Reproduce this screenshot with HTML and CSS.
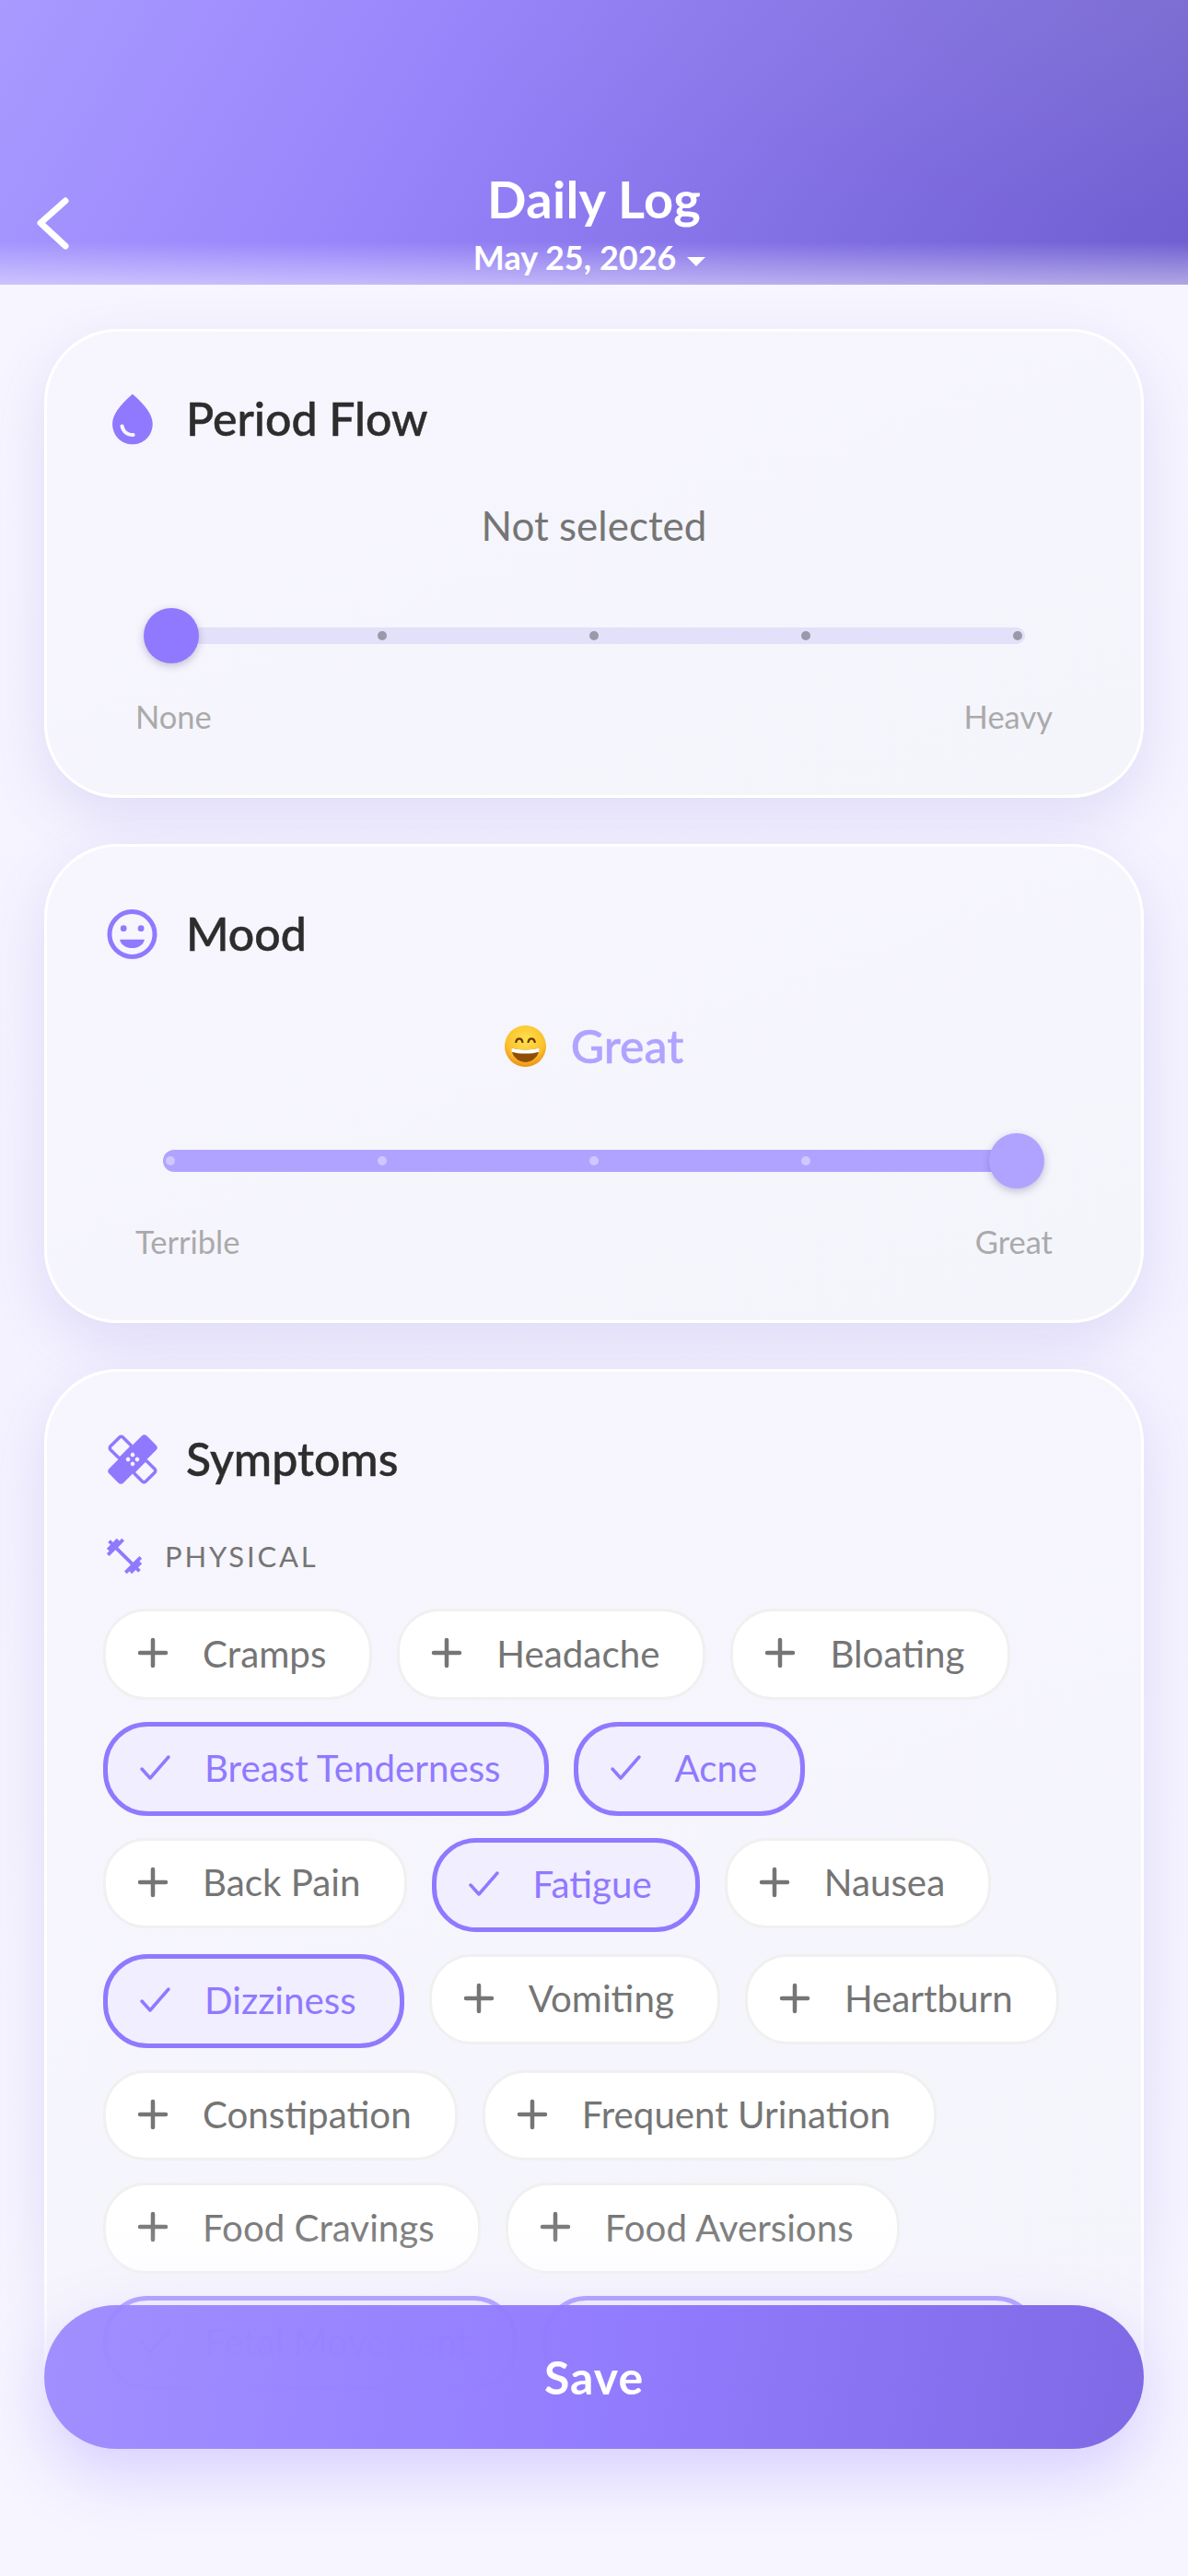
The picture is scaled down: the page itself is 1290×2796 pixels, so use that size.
FILE: index.html

```html
<!DOCTYPE html>
<html>
<head>
	<meta charset="utf-8">
	<title>Daily Log</title>
	<link rel="stylesheet" href="styles.css">
</head>
<body>
<div class="screen">
	<header class="topbar">
		<a class="back">
			<svg width="40" height="60" viewBox="0 0 40 60"><polyline points="34,6 7,30 34,55" fill="none" stroke="#fff" stroke-width="7" stroke-linecap="round" stroke-linejoin="round"/></svg>
		</a>
		<div class="topbar-title">
			<h1>Daily Log</h1>
			<div class="date">May 25, 2026 <span class="caret"></span></div>
		</div>
	</header>

	<main class="content">
		<section class="card">
			<div class="card-head">
				<svg class="icon" viewBox="0.3 1 22 22"><path fill="#9079ff" fill-rule="evenodd" d="M12 2c-5.33 4.55-8 8.48-8 11.8 0 4.98 3.8 8.2 8 8.2s8-3.22 8-8.2c0-3.32-2.67-7.25-8-11.8zM7.83 14c.37 0 .67.26.74.62.41 2.22 2.28 2.98 3.64 2.87.43-.02.79.32.79.75 0 .4-.32.73-.72.75-2.13.13-4.62-1.09-5.19-4.12-.08-.45.28-.87.74-.87z"/></svg>
				<h2>Period Flow</h2>
			</div>
			<div class="status">Not selected</div>
			<div class="slider">
				<div class="track">
					<i></i><i></i><i></i><i></i><i></i>
				</div>
				<div class="thumb"></div>
			</div>
			<div class="ends"><span>None</span><span>Heavy</span></div>
		</section>

		<section class="card">
			<div class="card-head">
				<svg class="icon" viewBox="-4.500 -3 60 60">
					<circle cx="27" cy="27" r="24.5" fill="none" stroke="#9079ff" stroke-width="5"/>
					<circle cx="17.7" cy="20.7" r="3.4" fill="#9079ff"/>
					<circle cx="36.6" cy="20.7" r="3.4" fill="#9079ff"/>
					<path d="M13.6 32.7H40.4C39.5 38.5 33.5 42 27 42S14.5 38.5 13.6 32.7Z" fill="#9079ff"/>
				</svg>
				<h2>Mood</h2>
			</div>
			<div class="status status-mood">
				<svg class="emoji" viewBox="0 0 44 44">
					<defs>
						<radialGradient id="face" cx="50%" cy="35%" r="65%">
							<stop offset="0" stop-color="#ffe14d"/>
							<stop offset=".7" stop-color="#fcc12c"/>
							<stop offset="1" stop-color="#ee8f12"/>
						</radialGradient>
					</defs>
					<circle cx="22" cy="22" r="22" fill="url(#face)"/>
					<path d="M12 17.5c1-4.5 6-4.500 7 0M25 17.5c1-4.500 6-4.500 7 0" fill="none" stroke="#6e3a0c" stroke-width="2.200" stroke-linecap="round"/>
					<path d="M7 24c9 2.500 21 2.500 30 0-.5 9-7.500 15-15 15S7.500 33 7 24Z" fill="#8f4e08"/>
					<path d="M7 24c9 2.500 21 2.500 30 0l-.4 4c-9 2.500-20.200 2.500-29.200 0Z" fill="#fff"/>
				</svg>
				<span>Great</span>
			</div>
			<div class="slider slider-full">
				<div class="track">
					<i></i><i></i><i></i><i></i><i></i>
				</div>
				<div class="thumb"></div>
			</div>
			<div class="ends"><span>Terrible</span><span>Great</span></div>
		</section>

		<section class="card">
			<div class="card-head">
				<svg class="icon" viewBox="-5 -3 60 60">
					<g transform="rotate(-45 27 27)">
						<rect x="-2" y="16" width="58" height="22" rx="4" fill="#9079ff"/>
						<rect x="17.500" y="0" width="19" height="16.800" rx="2.500" fill="none" stroke="#9079ff" stroke-width="3.500"/>
						<rect x="17.500" y="37.200" width="19" height="16.800" rx="2.500" fill="none" stroke="#9079ff" stroke-width="3.500"/>
						<circle cx="23.500" cy="23.500" r="2.300" fill="#f5f4fc"/>
						<circle cx="30.500" cy="23.500" r="2.300" fill="#f5f4fc"/>
						<circle cx="23.500" cy="30.500" r="2.300" fill="#f5f4fc"/>
						<circle cx="30.500" cy="30.500" r="2.300" fill="#f5f4fc"/>
					</g>
				</svg>
				<h2>Symptoms</h2>
			</div>
			<div class="group-head">
				<svg width="46" height="46" viewBox="0 0 24 24"><path fill="#9079ff" d="M20.57 14.86L22 13.43 20.57 12 17 15.57 8.43 7 12 3.43 10.57 2 9.14 3.43 7.71 2 5.57 4.14 4.14 2.71 2.71 4.14l1.43 1.43L2 7.71l1.43 1.43L2 10.57 3.43 12 7 8.43 15.57 17 12 20.57 13.43 22l1.43-1.43L16.29 22l2.14-2.140 1.43 1.43 1.43-1.43-1.43-1.43L22 16.29z"/></svg>
				<span>PHYSICAL</span>
			</div>
			<div class="chips">
				<div class="chip"><svg class="chip-icon" viewBox="0 0 36 36"><path d="M18 4V32M4 18H32"/></svg>Cramps</div>
				<div class="chip"><svg class="chip-icon" viewBox="0 0 36 36"><path d="M18 4V32M4 18H32"/></svg>Headache</div>
				<div class="chip"><svg class="chip-icon" viewBox="0 0 36 36"><path d="M18 4V32M4 18H32"/></svg>Bloating</div>
				<div class="chip on"><svg class="chip-icon" viewBox="0 0 36 36"><path d="M4 19L13 29L33 6"/></svg>Breast Tenderness</div>
				<div class="chip on"><svg class="chip-icon" viewBox="0 0 36 36"><path d="M4 19L13 29L33 6"/></svg>Acne</div>
				<div class="chip"><svg class="chip-icon" viewBox="0 0 36 36"><path d="M18 4V32M4 18H32"/></svg>Back Pain</div>
				<div class="chip on"><svg class="chip-icon" viewBox="0 0 36 36"><path d="M4 19L13 29L33 6"/></svg>Fatigue</div>
				<div class="chip"><svg class="chip-icon" viewBox="0 0 36 36"><path d="M18 4V32M4 18H32"/></svg>Nausea</div>
				<div class="chip on"><svg class="chip-icon" viewBox="0 0 36 36"><path d="M4 19L13 29L33 6"/></svg>Dizziness</div>
				<div class="chip"><svg class="chip-icon" viewBox="0 0 36 36"><path d="M18 4V32M4 18H32"/></svg>Vomiting</div>
				<div class="chip"><svg class="chip-icon" viewBox="0 0 36 36"><path d="M18 4V32M4 18H32"/></svg>Heartburn</div>
				<div class="chip"><svg class="chip-icon" viewBox="0 0 36 36"><path d="M18 4V32M4 18H32"/></svg>Constipation</div>
				<div class="chip"><svg class="chip-icon" viewBox="0 0 36 36"><path d="M18 4V32M4 18H32"/></svg>Frequent Urination</div>
				<div class="chip"><svg class="chip-icon" viewBox="0 0 36 36"><path d="M18 4V32M4 18H32"/></svg>Food Cravings</div>
				<div class="chip"><svg class="chip-icon" viewBox="0 0 36 36"><path d="M18 4V32M4 18H32"/></svg>Food Aversions</div>
				<div class="chip on"><svg class="chip-icon" viewBox="0 0 36 36"><path d="M4 19L13 29L33 6"/></svg>Fetal Movement</div>
				<div class="chip on chip-hidden"></div>
			</div>
		</section>
	</main>

	<div class="fade"></div>
	<button class="save">Save</button>
</div>
</body>
</html>
```

FILE: styles.css

```css
* {
	box-sizing: border-box;
}
html, body {
	margin: 0;
	padding: 0;
}
body {
	font-family: "Lato", "Noto Sans", sans-serif;
}
.screen {
	position: relative;
	width: 1290px;
	height: 2796px;
	overflow: hidden;
	background: linear-gradient(180deg, #f8f6ff, #f4f2ff 50%, #f7f5ff);
}

/* top bar */
.topbar {
	height: 309px;
	display: flex;
	justify-content: center;
	padding-top: 185px;
	position: relative;
	color: #fff;
	background:
		linear-gradient(180deg, rgba(255,255,255,0) 262px, rgba(255,255,255,0.45) 309px),
		radial-gradient(800px 240px at 100% 0, rgba(170,170,180,0.14), rgba(170,170,180,0)),
		linear-gradient(120deg, #a89aff 0%, #9985fb 35%, #7d6be0 75%, #6f5ed0 100%);
}
.back {
	position: absolute;
	left: 37px;
	top: 212px;
	display: block;
	height: 60px;
}
.topbar-title {
	text-align: center;
}
.topbar h1 {
	margin: 0;
	font-size: 56px;
	line-height: 62px;
	font-weight: 700;
	letter-spacing: 0.3px;
}
.date {
	margin-top: 10px;
	font-size: 36px;
	line-height: 44px;
	font-weight: 700;
}
.caret {
	display: inline-block;
	margin: 0 10px 0 3px;
	vertical-align: middle;
	border-left: 10px solid transparent;
	border-right: 10px solid transparent;
	border-top: 10px solid #fff;
}

/* cards */
.content {
	padding: 48px 48px 0;
	display: flex;
	flex-direction: column;
	gap: 50px;
}
.card {
	border: 3px solid #fff;
	border-radius: 80px;
	padding: 65px 61px 63px;
	background: linear-gradient(160deg, #f7f6fe, #f4f4fb);
	box-shadow: 0 20px 60px rgba(110,100,210,0.17);
}
.card-head {
	display: flex;
	align-items: center;
	gap: 30px;
	height: 60px;
}
.card-head h2 {
	margin: 0 0 3px;
	font-size: 50px;
	line-height: 56px;
	font-weight: 500;
	color: #2d2d2d;
	-webkit-text-stroke: 0.5px #2d2d2d;
}
.icon {
	width: 60px;
	height: 60px;
	flex: none;
}

.status {
	height: 60px;
	margin: 56px 0 59px;
	padding-bottom: 2px;
	display: flex;
	align-items: center;
	justify-content: center;
	font-size: 44px;
	color: #757575;
}
.status-mood {
	height: 68px;
	margin: 57px 0 61px;
	padding-bottom: 0;
	gap: 27px;
	font-size: 50px;
	font-weight: 500;
	color: #b0a3ff;
	-webkit-text-stroke: 0.5px #b0a3ff;
}
.emoji {
	width: 45px;
	height: 45px;
}

/* slider */
.slider {
	position: relative;
	height: 60px;
	margin: 0 44px;
	padding: 0 21px;
	display: flex;
	align-items: center;
}
.track {
	flex: 1;
	height: 18px;
	border-radius: 9px;
	padding: 0 3px;
	display: flex;
	align-items: center;
	justify-content: space-between;
	background: #e3e0f9;
}
.track i {
	width: 10px;
	height: 10px;
	border-radius: 50%;
	background: #9c98ac;
}
.thumb {
	position: absolute;
	left: 0;
	top: 0;
	width: 60px;
	height: 60px;
	border-radius: 50%;
	background: #9079ff;
	box-shadow: 0 3px 8px rgba(60,50,120,0.28);
}
.slider-full .track {
	height: 24px;
	border-radius: 12px;
	background: #b0a3ff;
}
.slider-full .track i {
	background: #cfc7ff;
}
.slider-full .thumb {
	left: auto;
	right: 0;
	background: #b0a3ff;
}
.ends {
	display: flex;
	justify-content: space-between;
	margin: 36px 35px 0;
	font-size: 34.5px;
	line-height: 44px;
	color: #aaa;
}

/* symptoms */
.group-head {
	display: flex;
	align-items: center;
	gap: 21px;
	height: 40px;
	margin: 55px 0 37px;
	font-size: 31px;
	letter-spacing: 2.800px;
	color: #757575;
}
.chips {
	display: flex;
	flex-wrap: wrap;
	align-items: flex-start;
	gap: 24px 27px;
}
.chip {
	display: flex;
	align-items: center;
	height: 98.5px;
	padding: 0 47px 2px 33px;
	border: 3px solid #f0f0f0;
	border-radius: 46px;
	background: #fff;
	font-size: 40.3px;
	color: #757575;
}
.chip-icon {
	width: 36px;
	height: 36px;
	margin-right: 36px;
	fill: none;
	stroke: #757575;
	stroke-width: 4.500;
	stroke-linecap: round;
	stroke-linejoin: round;
}
.chip.on {
	height: 102px;
	border: 5px solid #9079ff;
	border-radius: 48px;
	background: #f1eeff;
	color: #9079ff;
}
.chip.on .chip-icon {
	stroke: #9079ff;
	stroke-width: 3.500;
}
.chip-hidden {
	width: 540px;
}

/* save */
.fade {
	position: absolute;
	left: 0;
	right: 0;
	top: 2400px;
	bottom: 0;
	background: linear-gradient(180deg, rgba(247,245,255,0) 0, rgba(247,245,255,0.35) 95px, #f7f5ff 230px);
}
.save {
	position: absolute;
	left: 48px;
	top: 2502px;
	width: 1194px;
	height: 156px;
	border: 0;
	border-radius: 78px;
	font-family: inherit;
	font-size: 50px;
	letter-spacing: 1px;
	font-weight: 700;
	color: #fff;
	background: linear-gradient(100deg, rgba(156,137,255,0.94) 0%, rgba(144,121,255,0.97) 50%, #7f69e5 100%);
	box-shadow: 0 28px 70px rgba(144,121,255,0.3);
}
```
